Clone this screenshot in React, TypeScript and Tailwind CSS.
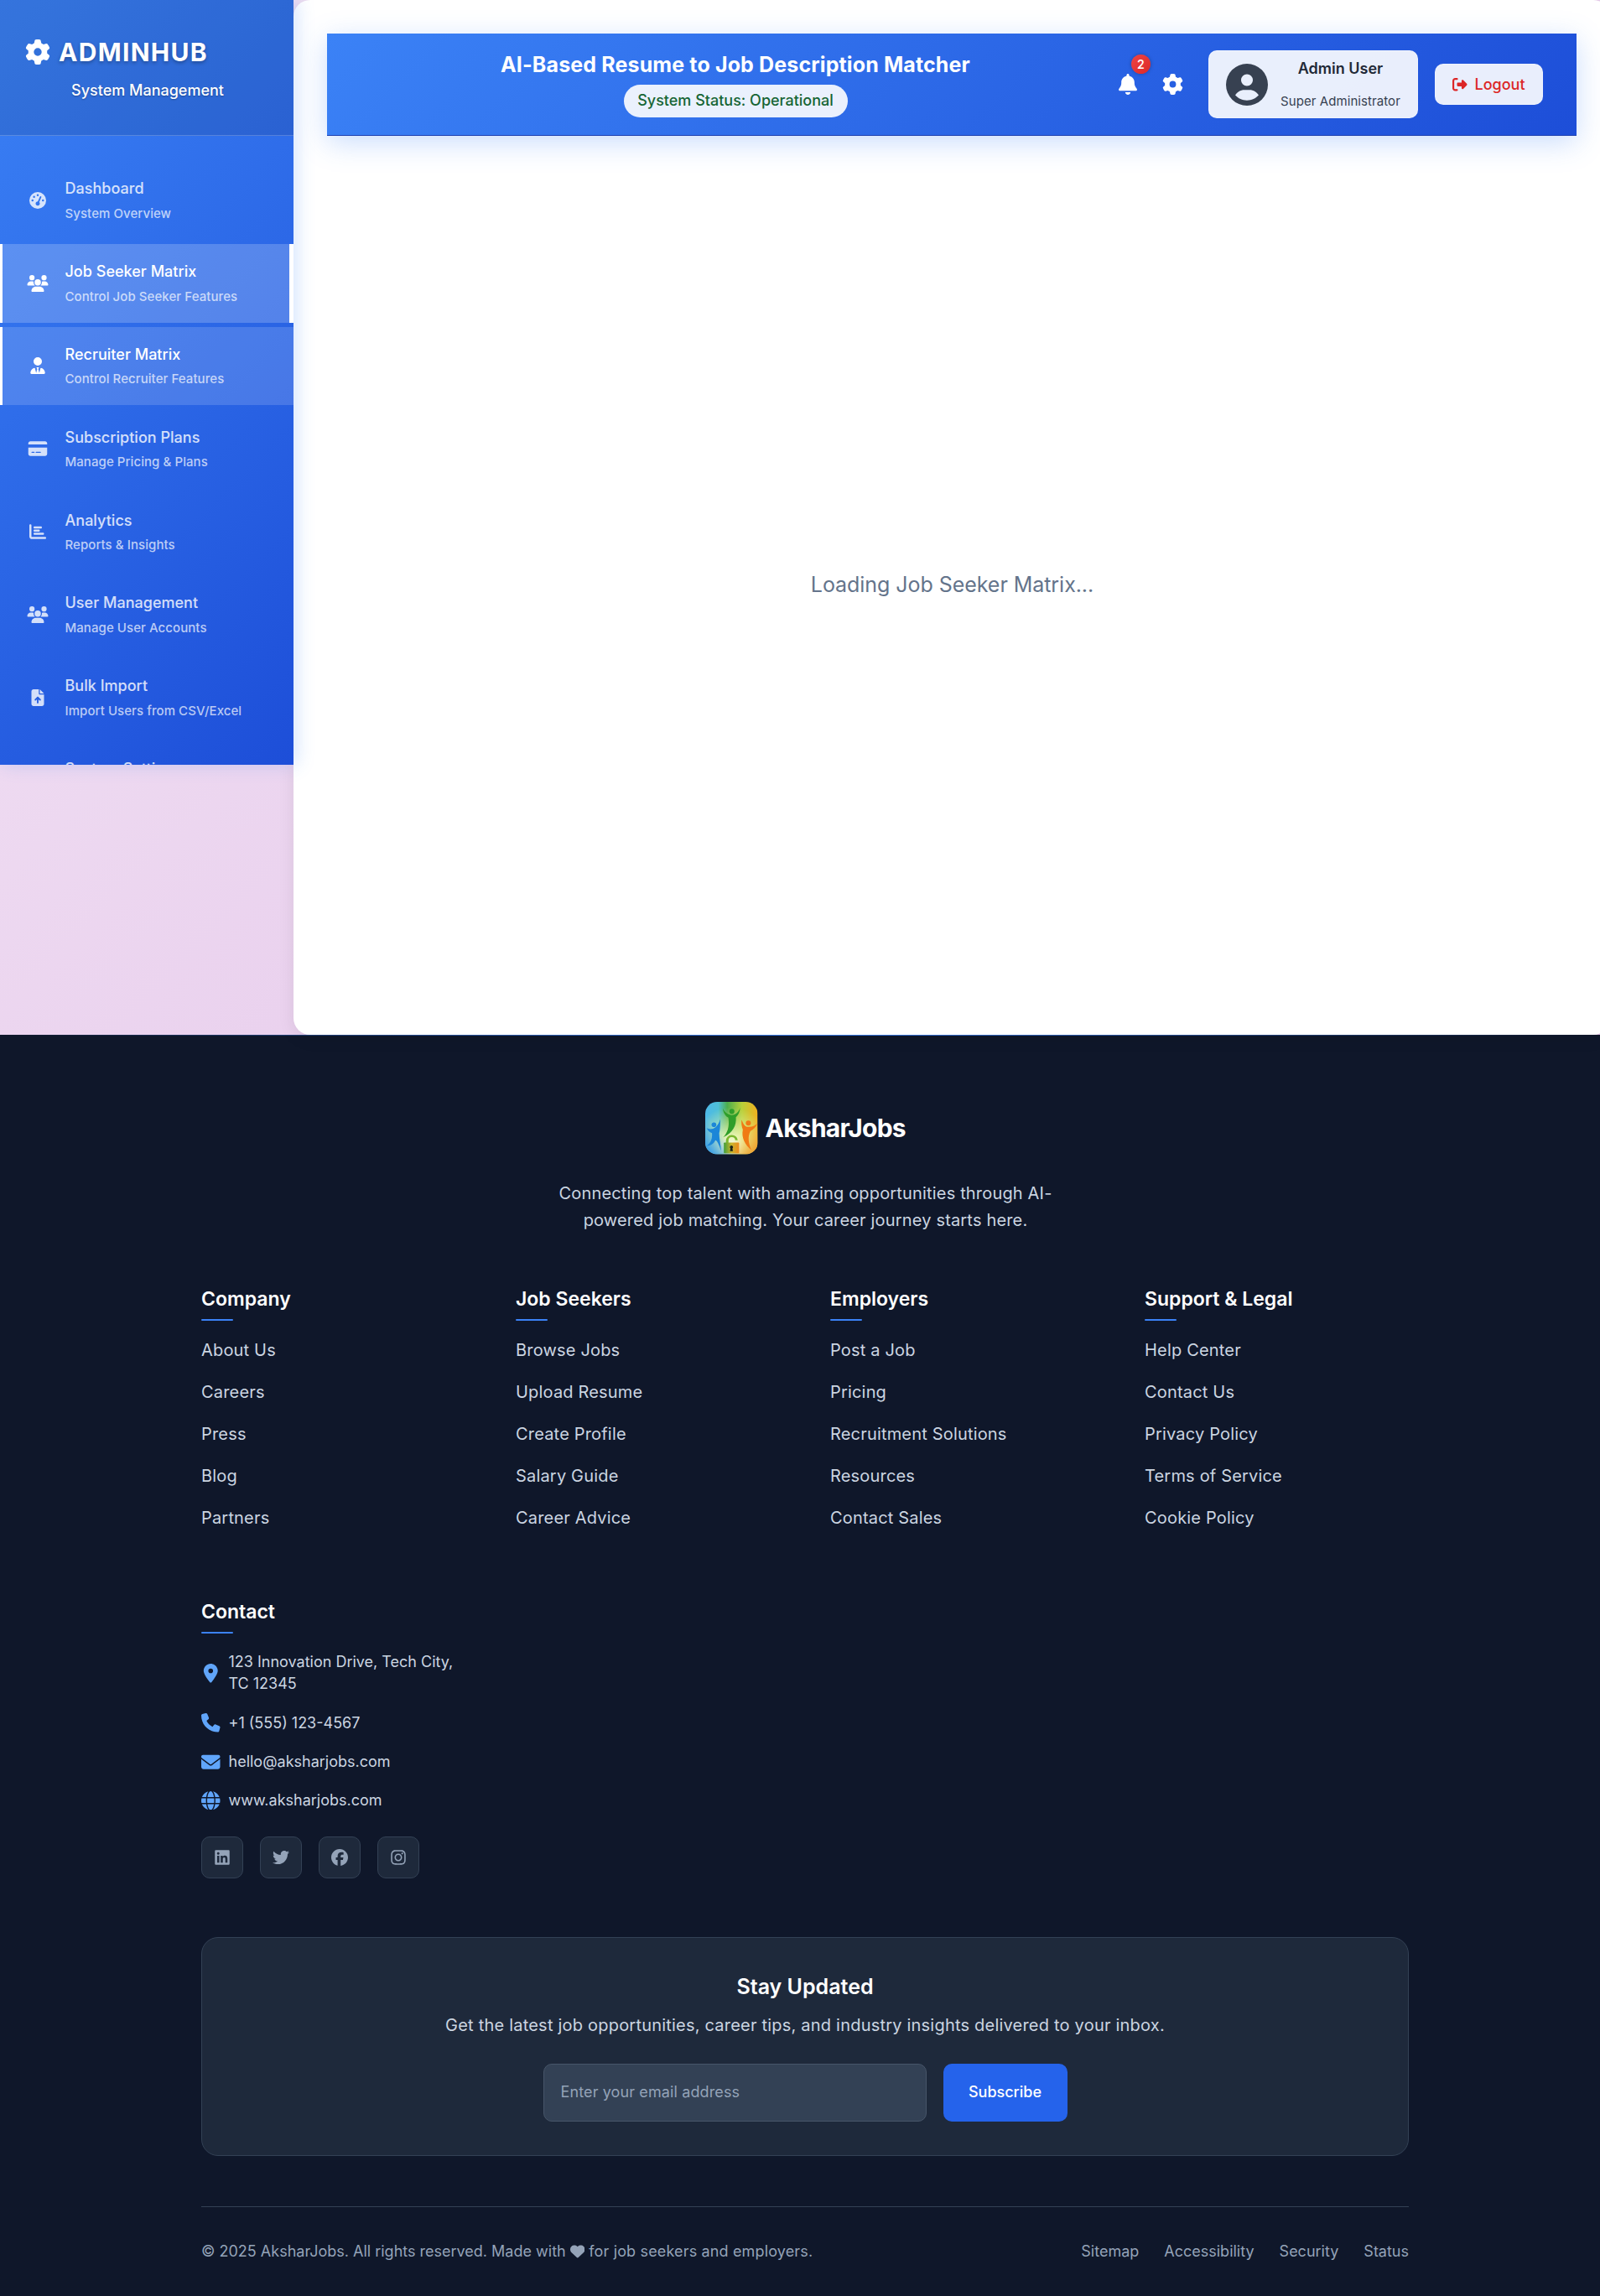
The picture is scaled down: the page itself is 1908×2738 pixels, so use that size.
import React from "react";
import {
  FaGear,
  FaGaugeHigh,
  FaUsers,
  FaUserTie,
  FaCreditCard,
  FaChartBar,
  FaFileArrowUp,
  FaBell,
  FaCircleUser,
  FaRightFromBracket,
  FaLocationDot,
  FaPhone,
  FaEnvelope,
  FaGlobe,
  FaLinkedin,
  FaTwitter,
  FaFacebook,
  FaInstagram,
  FaHeart,
} from "react-icons/fa6";

const navItems = [
  { icon: FaGaugeHigh, title: "Dashboard", subtitle: "System Overview", state: "idle" },
  { icon: FaUsers, title: "Job Seeker Matrix", subtitle: "Control Job Seeker Features", state: "active" },
  { icon: FaUserTie, title: "Recruiter Matrix", subtitle: "Control Recruiter Features", state: "hover" },
  { icon: FaCreditCard, title: "Subscription Plans", subtitle: "Manage Pricing & Plans", state: "idle" },
  { icon: FaChartBar, title: "Analytics", subtitle: "Reports & Insights", state: "idle" },
  { icon: FaUsers, title: "User Management", subtitle: "Manage User Accounts", state: "idle" },
  { icon: FaFileArrowUp, title: "Bulk Import", subtitle: "Import Users from CSV/Excel", state: "idle" },
  { icon: FaGear, title: "System Settings", subtitle: "", state: "idle" },
];

const itemStyles: Record<string, string> = {
  idle: "border-transparent text-white/80",
  active: "border-white bg-white/20 text-white",
  hover: "border-white bg-white/15 text-white",
};

const footerColumns = [
  { title: "Company", links: ["About Us", "Careers", "Press", "Blog", "Partners"] },
  { title: "Job Seekers", links: ["Browse Jobs", "Upload Resume", "Create Profile", "Salary Guide", "Career Advice"] },
  { title: "Employers", links: ["Post a Job", "Pricing", "Recruitment Solutions", "Resources", "Contact Sales"] },
  { title: "Support & Legal", links: ["Help Center", "Contact Us", "Privacy Policy", "Terms of Service", "Cookie Policy"] },
];

const contacts = [
  { icon: FaLocationDot, text: "123 Innovation Drive, Tech City, TC 12345" },
  { icon: FaPhone, text: "+1 (555) 123-4567" },
  { icon: FaEnvelope, text: "hello@aksharjobs.com" },
  { icon: FaGlobe, text: "www.aksharjobs.com" },
];

const socials = [FaLinkedin, FaTwitter, FaFacebook, FaInstagram];

function Sidebar() {
  return (
    <aside className="relative z-10 h-[912px] w-[350px] shrink-0 overflow-hidden bg-linear-135/srgb from-[#3b82f6] to-[#1d4ed8] shadow-[4px_0_20px_rgba(59,130,246,0.22)]">
      <div className="h-[162px] border-b border-white/20 bg-black/10 px-[30px] pt-[38px] text-white">
        <div className="flex h-[48px] items-center gap-[10px] [text-shadow:0_2px_4px_rgba(0,0,0,0.3)]">
          <FaGear className="size-[30px]" />
          <span className="text-[30px] font-bold tracking-[1.3px]">ADMINHUB</span>
        </div>
        <div className="mt-[8px] h-[28px] pl-[2px] text-center text-lg leading-[28px] font-medium [text-shadow:0_1px_2px_rgba(0,0,0,0.3)]">
          System Management
        </div>
      </div>
      <nav className="pt-[30px]">
        {navItems.map(({ icon: Icon, title, subtitle, state }) => (
          <div
            key={title}
            className={`relative mb-[5px] flex h-[93.8px] items-center border-l-3 pl-[27px] ${itemStyles[state]}`}
          >
            <Icon className="mr-[17.5px] h-[20px] w-[30px]" />
            <div className="flex flex-col gap-[3.5px] pt-[0.5px]">
              <span className="text-lg leading-[28px] font-medium tracking-[0.02px]">{title}</span>
              <span className="min-h-[24px] text-[15px] leading-[24px] font-medium tracking-[0.07px] text-white/70">
                {subtitle}
              </span>
            </div>
            {state === "active" && <span className="absolute top-0 right-0 h-full w-[5px] bg-white" />}
          </div>
        ))}
      </nav>
    </aside>
  );
}

function TopBar() {
  return (
    <header className="flex h-[122px] items-center justify-between border-b border-[#1e40af] bg-linear-135/srgb from-[#3b82f6] to-[#1d4ed8] px-[40px] shadow-[0_8px_32px_rgba(59,130,246,0.27)]">
      <div className="flex flex-1 flex-col items-center">
        <h1 className="text-[25px] leading-[30px] font-bold tracking-[0.13px] text-white">
          AI-Based Resume to Job Description Matcher
        </h1>
        <span className="mt-[9.5px] w-[267px] rounded-[20px] bg-white/90 text-center text-lg leading-[38.5px] font-medium text-[#166534]">
          System Status: Operational
        </span>
      </div>
      <div className="flex items-center gap-[20px]">
        <div className="flex gap-[10px] text-white">
          <div className="relative flex w-[42px] justify-center py-[10px]">
            <FaBell className="h-[25px] w-[22px]" />
            <span className="absolute -top-[13px] left-[25px] flex h-[22.5px] w-[22.5px] items-center justify-center rounded-full bg-linear-135 from-[#ef4444] to-[#dc2626] text-[14px] font-semibold shadow-[0_0_4px_rgba(0,0,0,0.3)]">
              2
            </span>
          </div>
          <div className="flex w-[45px] justify-center py-[10px]">
            <FaGear className="size-[25px]" />
          </div>
        </div>
        <div className="flex h-[81px] w-[250px] items-center gap-[15px] rounded-[10px] border border-white/30 bg-white/90 pl-[20px]">
          <FaCircleUser className="size-[50px] text-[#374151]" />
          <div className="flex flex-col items-center gap-[13px]">
            <span className="text-lg leading-[28px] font-semibold text-[#1f2937]">Admin User</span>
            <span className="text-[15px] leading-[24px] tracking-[0.08px] text-[#374151]">Super Administrator</span>
          </div>
        </div>
        <button className="flex h-[49px] w-[129px] items-center gap-[9px] rounded-[10px] border border-white/30 bg-white/90 pl-[20px] text-lg font-medium text-[#dc2626]">
          <FaRightFromBracket className="size-[17.5px]" />
          Logout
        </button>
      </div>
    </header>
  );
}

function Logo() {
  return (
    <svg className="size-[62.5px]" viewBox="0 0 62 62">
      <defs>
        <linearGradient id="sky" x1="0" x2="1">
          <stop offset="0" stopColor="#4db8e8" />
          <stop offset="0.25" stopColor="#4fc0d8" />
          <stop offset="0.42" stopColor="#4cae4c" />
          <stop offset="0.7" stopColor="#b8cf3a" />
          <stop offset="1" stopColor="#f2b01e" />
        </linearGradient>
        <radialGradient id="glow" cx="0.5" cy="0.85" r="0.75">
          <stop offset="0" stopColor="#fffff0" />
          <stop offset="0.3" stopColor="#f6fbc0" stopOpacity="0.85" />
          <stop offset="1" stopColor="#e8f59a" stopOpacity="0" />
        </radialGradient>
        <linearGradient id="deep" x1="0" x2="1" y1="1" y2="0">
          <stop offset="0" stopColor="#1488f0" stopOpacity="0.9" />
          <stop offset="0.35" stopColor="#1e90f0" stopOpacity="0" />
        </linearGradient>
        <linearGradient id="amber" x1="1" x2="0" y1="1" y2="0">
          <stop offset="0" stopColor="#f08a1c" stopOpacity="0.9" />
          <stop offset="0.35" stopColor="#f5a623" stopOpacity="0" />
        </linearGradient>
        <linearGradient id="lock" x1="0" x2="1">
          <stop offset="0" stopColor="#3f9e3a" />
          <stop offset="0.5" stopColor="#c9b52c" />
          <stop offset="1" stopColor="#f08a1c" />
        </linearGradient>
        <clipPath id="tile">
          <rect width="62" height="62" rx="14" />
        </clipPath>
      </defs>
      <g clipPath="url(#tile)">
        <rect width="62" height="62" fill="url(#sky)" />
        <rect width="62" height="62" fill="url(#glow)" />
        <rect width="62" height="62" fill="url(#deep)" />
        <rect width="62" height="62" fill="url(#amber)" />
        <g className="fill-[#2f9e2a]">
          <circle cx="31.5" cy="11.3" r="3" />
          <path d="M20.7 7.7 C23 12 26 15 31 15.5 C36 15.5 39.5 12 41.3 6.7 C41 12 39 16 36.3 18 C37 28 33 36 21.3 42 C26 37 29 30 27.3 18.7 C24 17 21.5 13 20.7 7.7Z" />
        </g>
        <g className="fill-[#f07a14]">
          <circle cx="51" cy="25" r="3" />
          <path d="M43 21 C45 26 47 29.5 50.5 29.5 C55 30 59 28.5 61.7 25.3 C60 30 57 33 53.5 34.5 C50 41 51 49 54.7 57 C47 51 42.5 42 44.5 33 C43 29 42.5 25 43 21Z" />
        </g>
        <g className="fill-[#1c86d8]">
          <circle cx="10.3" cy="27" r="2.8" />
          <path d="M1.7 31 C6 33.5 14 33 17.7 20.3 C18 27 17.5 34 16.5 37 C16.5 44 18.5 51 18.7 58 C16 50 14 46 12 45.5 C10 50 6 52 2 52 C7 48 8.5 43 8 37 C5 36 3 34 1.7 31Z" />
        </g>
        <path d="M24.5 49 V46 A7 6.5 0 0 1 38.5 45.5 H35.5 A4 4 0 0 0 27.5 46 V49Z" fill="#7cb82f" />
        <rect x="22" y="48" width="18" height="12.8" rx="0.8" fill="url(#lock)" />
        <path d="M31 51.5 a2 2 0 0 1 1.2 3.5 l0.5 3.2 h-3.4 l0.5-3.2 a2 2 0 0 1 1.2-3.5Z" fill="#1c2418" />
      </g>
    </svg>
  );
}

function ColumnTitle({ children }: { children: React.ReactNode }) {
  return (
    <h3 className="relative mb-[27px] text-[23px] leading-[36px] font-semibold text-white after:absolute after:-bottom-[8px] after:left-0 after:h-[2px] after:w-[38px] after:rounded-[1px] after:bg-[#3b82f6] after:content-['']">
      {children}
    </h3>
  );
}

function Footer() {
  return (
    <footer className="h-[1504px] bg-[#0f172a]">
      <div className="h-px bg-linear-to-r from-transparent via-[#3b82f6] to-transparent" />
      <div className="ml-[240px] w-[1440px] pt-[79px]">
        <div className="flex flex-col items-center">
          <div className="flex h-[63px] items-center gap-[9px] pl-px">
            <Logo />
            <span className="text-[30px] font-bold tracking-[-0.75px] text-white">AksharJobs</span>
          </div>
          <p className="mt-[30px] w-[600px] pl-px text-center text-[20px] leading-[32px] tracking-[0.17px] text-[#cbd5e1]">
            Connecting top talent with amazing opportunities through AI-powered job matching. Your career journey starts
            here.
          </p>
        </div>

        <div className="mt-[60px] grid grid-cols-4 gap-[60px]">
          {footerColumns.map((col) => (
            <div key={col.title}>
              <ColumnTitle>{col.title}</ColumnTitle>
              <ul>
                {col.links.map((link) => (
                  <li key={link} className="mb-[18px] text-[20px] leading-[32px] tracking-[0.18px] text-[#cbd5e1]">
                    {link}
                  </li>
                ))}
              </ul>
            </div>
          ))}
          <div>
            <ColumnTitle>Contact</ColumnTitle>
            <ul className="flex flex-col gap-[20px] pt-[2px]">
              {contacts.map(({ icon: Icon, text }) => (
                <li
                  key={text}
                  className="flex items-center gap-[10px] text-lg leading-[26.25px] text-[#cbd5e1]"
                >
                  <Icon className="size-[22.5px] shrink-0 text-[#60a5fa]" />
                  <span>{text}</span>
                </li>
              ))}
            </ul>
            <div className="mt-[29.75px] flex gap-[20px]">
              {socials.map((Icon, i) => (
                <a
                  key={i}
                  className="flex size-[50px] items-center justify-center rounded-[10px] border border-[#334155] bg-[#1e293b] text-[#94a3b8]"
                >
                  <Icon className="size-[20px]" />
                </a>
              ))}
            </div>
          </div>
        </div>

        <section className="mt-[70px] flex h-[261px] flex-col items-center rounded-[20px] border border-[#334155] bg-[#1e293b] pt-[40px]">
          <h3 className="text-[25px] leading-[37.5px] font-semibold text-white">Stay Updated</h3>
          <p className="mt-[10.5px] text-[20px] leading-[32px] tracking-[0.21px] text-[#cbd5e1]">
            Get the latest job opportunities, career tips, and industry insights delivered to your inbox.
          </p>
          <div className="mt-[29.5px] flex h-[69px] w-[625px] gap-[20px]">
            <input
              className="min-w-0 flex-1 rounded-[10px] border border-[#475569] bg-[#334155] px-[20px] text-lg tracking-[0.12px] placeholder:text-[#94a3b8]"
              placeholder="Enter your email address"
            />
            <button className="w-[148px] rounded-[10px] bg-[#2563eb] text-lg font-medium text-white">
              Subscribe
            </button>
          </div>
        </section>

        <div className="mt-[60px] flex items-center justify-between border-t border-[#334155] pt-[40px] text-lg leading-[26.25px] text-[#94a3b8]">
          <p>
            © 2025 AksharJobs. All rights reserved. Made with <FaHeart className="inline size-[17.5px] align-[-2px]" />{" "}
            <span className="tracking-[0.15px]">for job seekers and employers.</span>
          </p>
          <div className="flex gap-[30px]">
            <span>Sitemap</span>
            <span>Accessibility</span>
            <span>Security</span>
            <span>Status</span>
          </div>
        </div>
      </div>
    </footer>
  );
}

export default function App() {
  return (
    <div className="w-full overflow-hidden font-['Inter',sans-serif]">
      <div className="flex h-[1234px] w-[1920px] items-start bg-linear-135/srgb from-[#f3e5f5] to-[#e1bee7]">
        <Sidebar />
        <main className="h-full flex-1 rounded-[20px] bg-white p-[40px] shadow-[0_4px_20px_rgba(0,0,0,0.08)]">
          <TopBar />
          <div className="flex h-[1072px] items-center justify-center pl-px text-[25px] tracking-[-0.05px] text-[#64748b]">
            Loading Job Seeker Matrix...
          </div>
        </main>
      </div>
      <Footer />
    </div>
  );
}
